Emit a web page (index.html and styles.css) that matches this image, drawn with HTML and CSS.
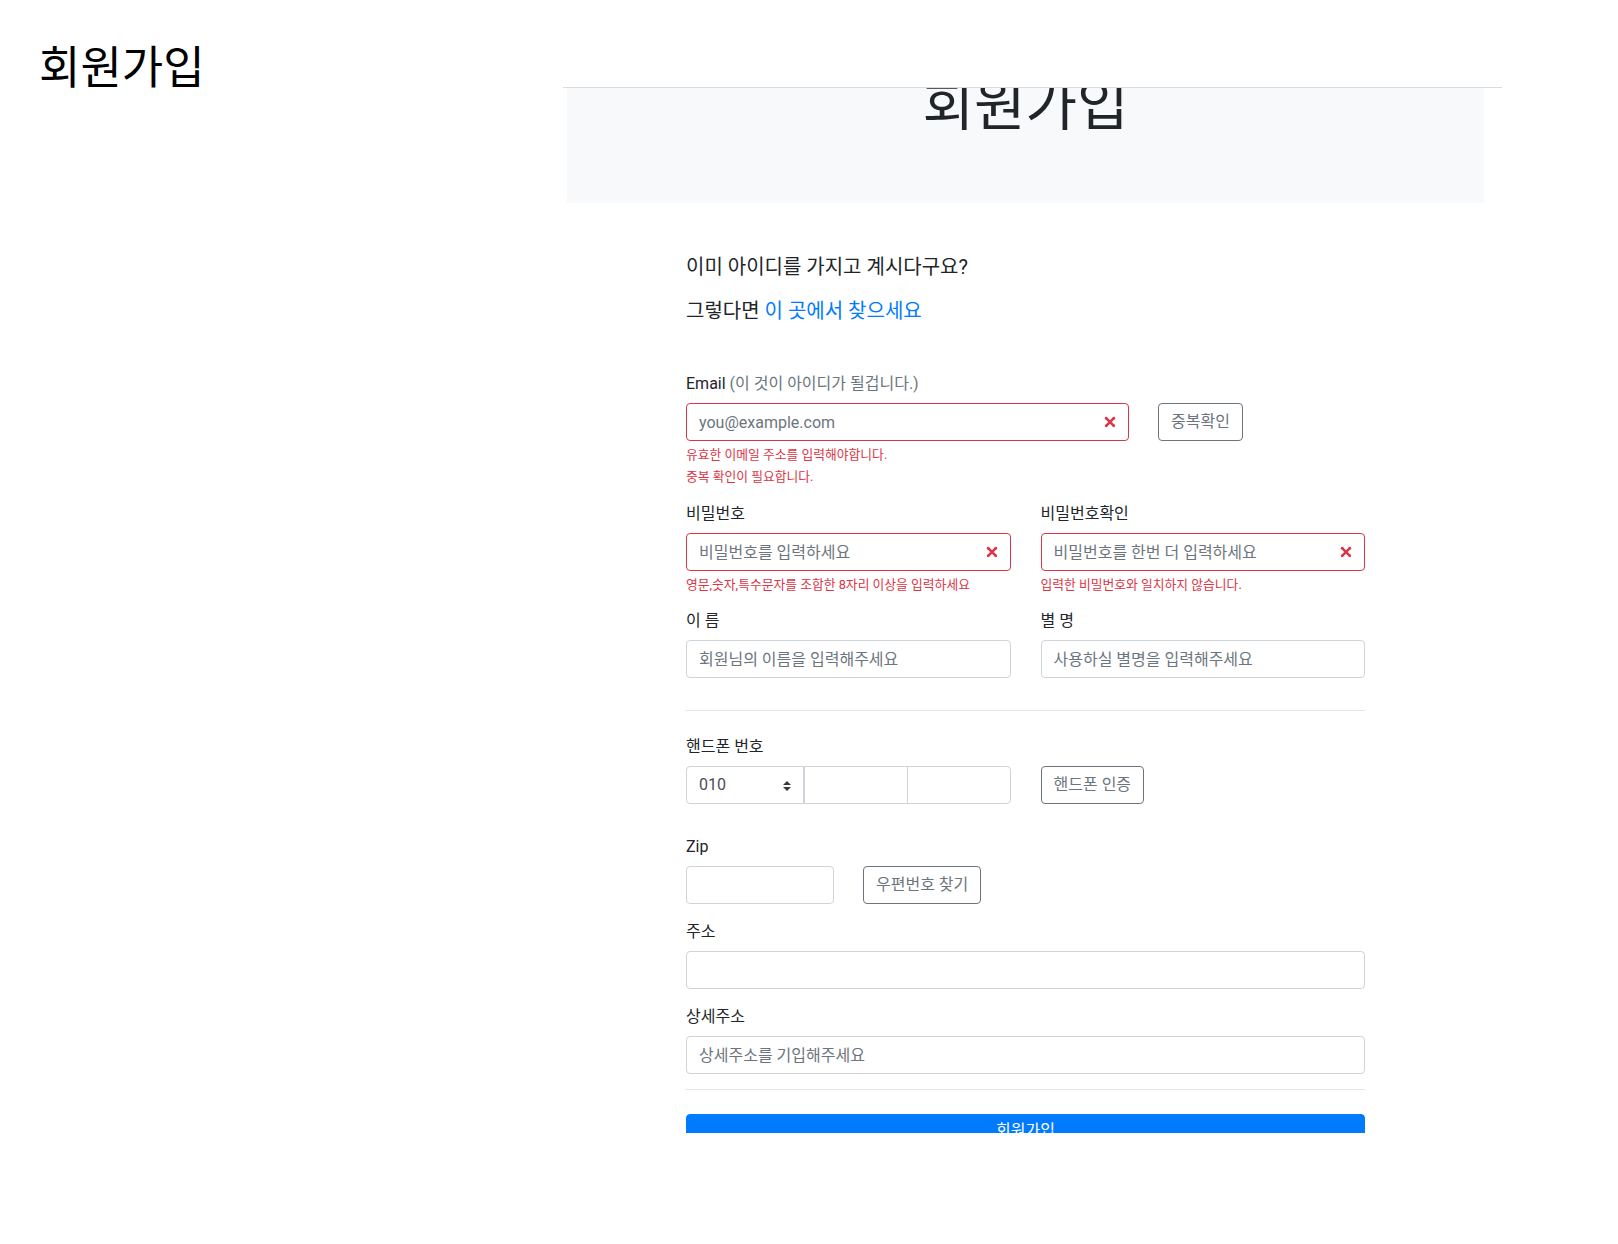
FILE: index.html
```html
<!DOCTYPE html>
<html lang="ko">
<head>
<meta charset="utf-8">
<title>회원가입</title>
<link rel="stylesheet" href="styles.css">
</head>
<body>
<div class="page">
  <aside class="side">
    <h1 class="side-title">회원가입</h1>
  </aside>
  <div class="frame">
    <div class="frame-head"></div>
    <div class="frame-body">
      <div class="jumbo"><h2 class="jumbo-title">회원가입</h2></div>
      <div class="form-wrap">
        <p class="lead lead-1">이미 아이디를 가지고 계시다구요?</p>
        <p class="lead lead-2">그렇다면 <a href="#" class="link">이 곳에서 찾으세요</a></p>
        <form class="form">
          <label class="label label-email">Email <span class="muted">(이 것이 아이디가 될겁니다.)</span></label>
          <div class="email-row">
            <div class="field field-email">
              <input class="input input-invalid" type="text" placeholder="you@example.com">
              <svg class="x-icon" viewBox="-2 -2 7 7" width="18" height="18"><path d="M0 0l3 3m0-3L0 3" stroke="#dc3545" fill="none"/><circle r=".5" fill="#dc3545"/><circle cx="3" r=".5" fill="#dc3545"/><circle cy="3" r=".5" fill="#dc3545"/><circle cx="3" cy="3" r=".5" fill="#dc3545"/></svg>
            </div>
            <button type="button" class="btn-outline btn-dup">중복확인</button>
          </div>
          <div class="feedback fb-1">유효한 이메일 주소를 입력해야합니다.</div>
          <div class="feedback fb-2">중복 확인이 필요합니다.</div>

          <div class="grid2 row-pw">
            <div class="col">
              <label class="label">비밀번호</label>
              <div class="field">
                <input class="input input-invalid" type="password" placeholder="비밀번호를 입력하세요">
                <svg class="x-icon" viewBox="-2 -2 7 7" width="18" height="18"><path d="M0 0l3 3m0-3L0 3" stroke="#dc3545" fill="none"/><circle r=".5" fill="#dc3545"/><circle cx="3" r=".5" fill="#dc3545"/><circle cy="3" r=".5" fill="#dc3545"/><circle cx="3" cy="3" r=".5" fill="#dc3545"/></svg>
              </div>
              <div class="feedback fb-1">영문,숫자,특수문자를 조합한 8자리 이상을 입력하세요</div>
            </div>
            <div class="col">
              <label class="label">비밀번호확인</label>
              <div class="field">
                <input class="input input-invalid" type="password" placeholder="비밀번호를 한번 더 입력하세요">
                <svg class="x-icon" viewBox="-2 -2 7 7" width="18" height="18"><path d="M0 0l3 3m0-3L0 3" stroke="#dc3545" fill="none"/><circle r=".5" fill="#dc3545"/><circle cx="3" r=".5" fill="#dc3545"/><circle cy="3" r=".5" fill="#dc3545"/><circle cx="3" cy="3" r=".5" fill="#dc3545"/></svg>
              </div>
              <div class="feedback fb-1">입력한 비밀번호와 일치하지 않습니다.</div>
            </div>
          </div>

          <div class="grid2 row-name">
            <div class="col">
              <label class="label">이 름</label>
              <input class="input" type="text" placeholder="회원님의 이름을 입력해주세요">
            </div>
            <div class="col">
              <label class="label">별 명</label>
              <input class="input" type="text" placeholder="사용하실 별명을 입력해주세요">
            </div>
          </div>

          <hr class="divider divider-1">

          <label class="label label-phone">핸드폰 번호</label>
          <div class="grid2">
            <div class="phone-group">
              <div class="select-box">
                <span>010</span>
                <svg class="select-arrows" viewBox="0 0 4 5" width="8" height="10"><path d="M2 0L0 2h4zm0 5L0 3h4z" fill="#343a40"/></svg>
              </div>
              <input class="input phone-mid" type="text">
              <input class="input phone-last" type="text">
            </div>
            <div class="col">
              <button type="button" class="btn-outline">핸드폰 인증</button>
            </div>
          </div>

          <label class="label label-zip">Zip</label>
          <div class="zip-row">
            <input class="input input-zip" type="text">
            <button type="button" class="btn-outline">우편번호 찾기</button>
          </div>

          <label class="label label-addr">주소</label>
          <input class="input" type="text">

          <label class="label label-addr">상세주소</label>
          <input class="input" type="text" placeholder="상세주소를 기입해주세요">

          <hr class="divider divider-2">

          <button type="button" class="btn-submit">회원가입</button>
        </form>
      </div>
    </div>
  </div>
</div>
</body>
</html>
```

FILE: styles.css
```css
* {
  box-sizing: border-box;
}

html,
body {
  margin: 0;
  padding: 0;
  background: #fff;
}

body {
  font-family: Roboto, "Noto Sans CJK KR", sans-serif;
  font-size: 16px;
  line-height: 1.5;
  color: #212529;
}

.page {
  display: flex;
  align-items: flex-start;
}

.side {
  width: 563px;
  flex: none;
  padding-left: 39px;
}

.side-title {
  margin: 42px 0 0;
  font-size: 45px;
  font-weight: 400;
  line-height: 1.2;
  color: #000;
}

.frame {
  width: 939px;
  height: 1133px;
  flex: none;
  overflow: hidden;
  position: relative;
}

.frame-head {
  position: absolute;
  top: 0;
  left: 0;
  right: 0;
  height: 88px;
  background: #fff;
  border-bottom: 1px solid #dadcdf;
  z-index: 2;
}

.frame-body {
  padding: 8px 18px 0 4px;
}

.jumbo {
  background: #f8f9fa;
  padding: 64px 32px;
}

.jumbo-title {
  margin: 0;
  font-size: 56px;
  font-weight: 400;
  line-height: 1.2;
  text-align: center;
  color: #212529;
  position: relative;
  top: 1px;
}

.form-wrap {
  width: 679px;
  margin: 49px auto 0;
}

.lead {
  margin: 0;
  font-size: 20px;
  line-height: 30px;
}

.lead-2 {
  margin-top: 14px;
}

.link {
  color: #007bff;
  text-decoration: none;
}

.form {
  margin: 0;
}

.label {
  display: block;
  margin: 15px 0 7px;
}

.label-email {
  margin-top: 46px;
}

.row-pw .label {
  margin-top: 16px;
}

.row-name .label {
  margin-top: 15px;
}

.muted {
  color: #6c757d;
}

.field {
  position: relative;
}

.input {
  display: block;
  width: 100%;
  height: 38px;
  padding: 6px 12px;
  font-family: inherit;
  font-size: 16px;
  line-height: 1.5;
  color: #495057;
  background: #fff;
  border: 1px solid #ced4da;
  border-radius: 4px;
  outline: none;
}

.input::placeholder {
  color: #6c757d;
  opacity: 1;
}

.input-invalid {
  border-color: #dc3545;
  padding-right: 36px;
}

.x-icon {
  position: absolute;
  right: 10px;
  top: 50%;
  margin-top: -9px;
}

.email-row {
  display: flex;
  gap: 29px;
  align-items: flex-start;
}

.field-email {
  width: 443px;
}

.btn-outline {
  height: 38px;
  padding: 6px 12px;
  font-family: inherit;
  font-size: 16px;
  line-height: 1.5;
  color: #6c757d;
  background: transparent;
  border: 1px solid #6c757d;
  border-radius: 4px;
  white-space: nowrap;
}

.feedback {
  font-size: 12.8px;
  line-height: 19px;
  color: #dc3545;
}

.fb-1 {
  margin-top: 4px;
}

.fb-2 {
  margin-top: 3px;
}

.grid2 {
  display: grid;
  grid-template-columns: 1fr 1fr;
  column-gap: 30px;
  align-items: start;
}

.divider {
  border: 0;
  border-top: 1px solid rgba(0, 0, 0, 0.1);
  height: 0;
  margin: 0;
}

.divider-1 {
  margin-top: 32px;
}

.label-phone {
  margin-top: 24px;
}

.phone-group {
  display: flex;
}

.select-box {
  position: relative;
  flex: 0 0 118px;
  height: 38px;
  padding: 6px 12px;
  color: #495057;
  border: 1px solid #ced4da;
  border-radius: 4px 0 0 4px;
}

.select-arrows {
  position: absolute;
  right: 12px;
  top: 14px;
}

.phone-mid,
.phone-last {
  flex: 1 1 0;
  min-width: 0;
  border-radius: 0;
}

.phone-last {
  margin-left: -1px;
  border-radius: 0 4px 4px 0;
}

.label-zip {
  margin-top: 31px;
}

.zip-row {
  display: flex;
  gap: 29px;
  align-items: flex-start;
}

.input-zip {
  width: 148px;
}

.label-addr {
  margin-top: 16px;
}

.divider-2 {
  margin-top: 15px;
}

.btn-submit {
  display: block;
  width: 100%;
  margin-top: 24px;
  padding: 4px 16px 18px;
  font-family: inherit;
  font-size: 16px;
  line-height: 24px;
  color: #fff;
  background: #007bff;
  border: 1px solid #007bff;
  border-radius: 4px;
  text-align: center;
}
```
